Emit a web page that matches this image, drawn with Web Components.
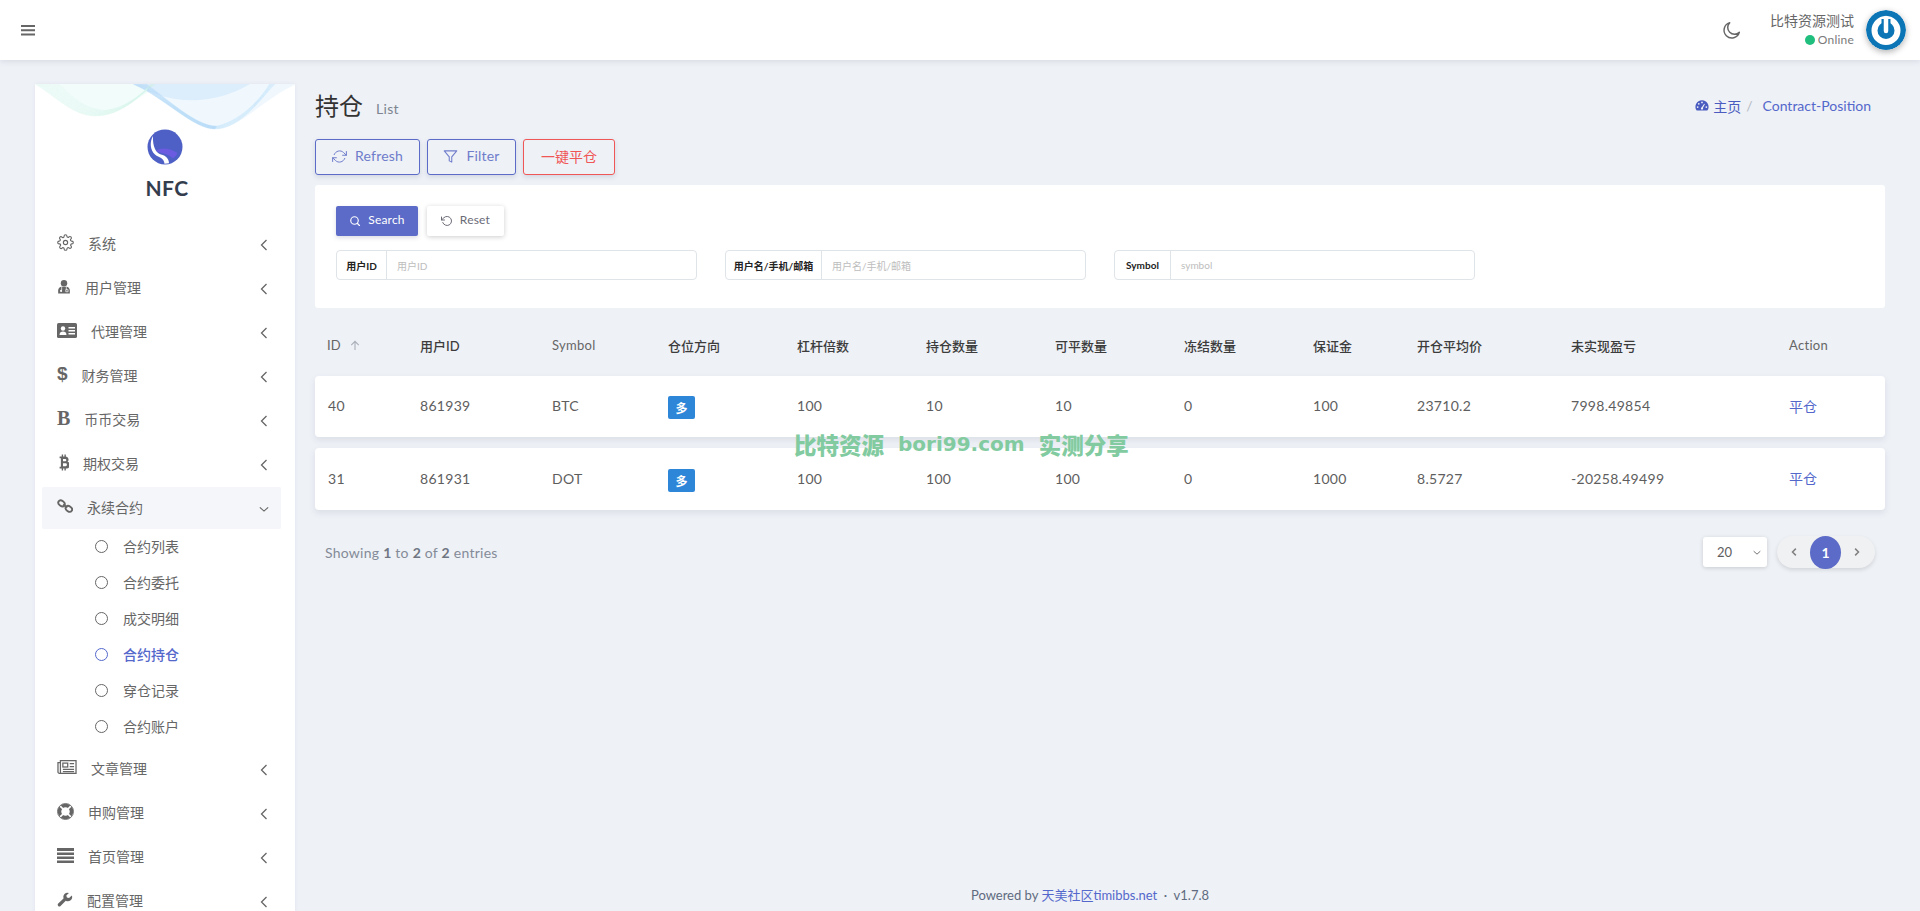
<!DOCTYPE html>
<html lang="zh">
<head>
<meta charset="utf-8">
<title>持仓</title>
<style>
  html, body { margin: 0; height: 911px; overflow: hidden; }
  body {
    display: flex; flex-direction: column;
    background: #eef1f6; color: #5e5e5e;
    font: 14px Lato, "Noto Sans CJK SC", sans-serif;
  }
</style>
</head>
<body>
<app-header></app-header>
<app-shell>
  <side-bar slot="side">
    <side-item icon="gear" label="系统"></side-item>
    <side-item icon="usermd" label="用户管理"></side-item>
    <side-item icon="card" label="代理管理"></side-item>
    <side-item glyph="$" label="财务管理"></side-item>
    <side-item glyph="B" serif label="币币交易"></side-item>
    <side-item icon="btc" label="期权交易"></side-item>
    <side-item icon="link" label="永续合约" open>
      <sub-item>合约列表</sub-item>
      <sub-item>合约委托</sub-item>
      <sub-item>成交明细</sub-item>
      <sub-item active>合约持仓</sub-item>
      <sub-item>穿仓记录</sub-item>
      <sub-item>合约账户</sub-item>
    </side-item>
    <side-item icon="news" label="文章管理"></side-item>
    <side-item icon="life" label="申购管理"></side-item>
    <side-item icon="rows" label="首页管理"></side-item>
    <side-item icon="wrench" label="配置管理"></side-item>
  </side-bar>

  <page-head></page-head>
  <tool-bar></tool-bar>
  <search-card>
    <search-field style="--label-w:49px" label="用户ID" hint="用户ID"></search-field>
    <search-field style="--label-w:95px" label="用户名/手机/邮箱" hint="用户名/手机/邮箱"></search-field>
    <search-field style="--label-w:55px" label="Symbol" hint="symbol"></search-field>
  </search-card>
  <table-head></table-head>
  <data-row values="40|861939|BTC||100|10|10|0|100|23710.2|7998.49854"></data-row>
  <data-row values="31|861931|DOT||100|100|100|0|1000|8.5727|-20258.49499"></data-row>
  <table-foot></table-foot>
  <app-footer></app-footer>
</app-shell>
<water-mark></water-mark>

<script>
// stroke icons use currentColor, filled ones set fill on their own paths
const ICONS = {
  bars: '<path d="M1 3h14v2H1zM1 7.2h14v2H1zM1 11.4h14v2H1z" fill="currentColor"/>',
  moon: '<path d="M20 14.5A8.5 8.5 0 1 1 9.5 4a6.8 6.8 0 0 0 10.5 10.5z" fill="none" stroke="currentColor" stroke-width="1.6" stroke-linejoin="round"/>',
  gear: '<circle cx="12" cy="12" r="3" fill="none" stroke="currentColor" stroke-width="1.6"/><path d="M19.4 15a1.65 1.65 0 0 0 .33 1.82l.06.06a2 2 0 1 1-2.83 2.83l-.06-.06a1.65 1.65 0 0 0-2.82 1.17V21a2 2 0 1 1-4 0v-.09a1.65 1.65 0 0 0-2.82-1.12l-.06.06a2 2 0 1 1-2.83-2.83l.06-.06A1.65 1.65 0 0 0 3.09 14H3a2 2 0 1 1 0-4h.09a1.65 1.65 0 0 0 1.12-2.82l-.06-.06a2 2 0 1 1 2.83-2.83l.06.06A1.65 1.65 0 0 0 10 3.09V3a2 2 0 1 1 4 0v.09a1.65 1.65 0 0 0 2.82 1.12l.06-.06a2 2 0 1 1 2.83 2.83l-.06.06A1.65 1.65 0 0 0 20.91 10H21a2 2 0 1 1 0 4h-.09a1.65 1.65 0 0 0-1.51 1z" fill="none" stroke="currentColor" stroke-width="1.6"/>',
  usermd: '<circle cx="12" cy="6.5" r="5.5" fill="currentColor"/><path d="M2 24v-5c0-4 3-6.5 6-6.5h8c3 0 6 2.500 6 6.500v5z" fill="currentColor"/><circle cx="7" cy="19.500" r="1.800" fill="#fff"/><path d="M15 17.500h4v3.500h-4zM8 13v5M16 13v5" fill="none" stroke="#fff" stroke-width="1.200"/>',
  card: '<rect x="0" y="1" width="20" height="15" rx="1.600" fill="currentColor"/><circle cx="6" cy="6.500" r="2.200" fill="#fff"/><path d="M2.500 13c0-2.500 1.500-3.500 3.500-3.500s3.500 1 3.500 3.500z" fill="#fff"/><path d="M11.500 5h6.500v1.500h-6.500zM11.500 8h6.500v1.500h-6.500zM11.500 11h6.500v1.500h-6.500z" fill="#fff"/>',
  btc: '<path d="M3 3h7a3.500 3.500 0 0 1 2.200 6.200A4 4 0 0 1 10.500 17H3v-2h1.500V5H3z" fill="currentColor"/><path d="M7 6v2.600h2.600a1.300 1.300 0 0 0 0-2.600zM7 11v3.300h3a1.650 1.650 0 0 0 0-3.300z" fill="#fff"/><path d="M5.500 .5h1.600v3H5.500zM8.700 .5h1.600v3H8.700zM5.500 16.500h1.600v3H5.500zM8.700 16.500h1.600v3H8.700z" fill="currentColor"/>',
  link: '<g fill="none" stroke="currentColor" stroke-width="2"><ellipse cx="4.800" cy="4.200" rx="3.700" ry="2.700" transform="rotate(35 4.800 4.200)"/><ellipse cx="12.600" cy="10" rx="3.700" ry="2.700" transform="rotate(35 12.600 10)"/><path d="M6.500 5.500l4.500 3.200"/></g>',
  news: '<g fill="none" stroke="currentColor" stroke-width="1.300"><path d="M3.500 1.500h16v13h-17a1.500 1.500 0 0 1-1.500-1.500v-9.500h2.500z"/><path d="M3.500 3.500v11"/><rect x="6" y="4" width="5" height="4"/><path d="M13 4.500h4.500M13 7.500h4.500M6 10.500h11.500M6 12.700h11.500"/></g>',
  life: '<circle cx="12" cy="12" r="8.500" fill="none" stroke="currentColor" stroke-width="5"/><path d="M4.500 4.500l4 4M19.500 4.500l-4 4M4.500 19.500l4-4M19.500 19.500l-4-4" stroke="#fff" stroke-width="2.400"/><circle cx="12" cy="12" r="11.300" fill="none" stroke="currentColor" stroke-width="1.200"/>',
  rows: '<path d="M0 1h17v3H0zM0 5.500h17v2.500H0zM0 9.500h17v2.500H0zM0 13.500h17v2.500H0z" fill="currentColor"/>',
  wrench: '<path d="M15.800 3.600l-3 2.700-2.300-.5-.6-2.200L12.700 1A4.600 4.600 0 0 0 6.900 6.900L1 12.600a1.800 1.800 0 0 0 2.500 2.500l5.800-5.800a4.600 4.600 0 0 0 6.500-5.700z" fill="currentColor"/>',
  left: '<path d="M6.500 1L1.500 6l5 5" fill="none" stroke="currentColor" stroke-width="1.300"/>',
  lbold: '<path d="M6.500 1.500L2 6l4.500 4.500" fill="none" stroke="currentColor" stroke-width="2"/>',
  rbold: '<path d="M1.500 1.500L6 6l-4.500 4.500" fill="none" stroke="currentColor" stroke-width="2"/>',
  down: '<path d="M1 1.500l5 4.500 5-4.500" fill="none" stroke="currentColor" stroke-width="1.300"/>',
  refresh: '<g fill="none" stroke="currentColor" stroke-width="1.600" stroke-linecap="round" stroke-linejoin="round"><path d="M23 4v6h-6M1 20v-6h6"/><path d="M3.500 9A9 9 0 0 1 18.400 5.600L23 10M1 14l4.600 4.400A9 9 0 0 0 20.500 15"/></g>',
  filter: '<path d="M22 3H2l8 9.500V19l4 2v-8.500z" fill="none" stroke="currentColor" stroke-width="1.700" stroke-linejoin="round"/>',
  search: '<circle cx="11" cy="11" r="7.500" fill="none" stroke="currentColor" stroke-width="2.300"/><path d="M21 21l-4.500-4.500" stroke="currentColor" stroke-width="2.300" stroke-linecap="round"/>',
  reset: '<g fill="none" stroke="currentColor" stroke-width="2" stroke-linecap="round" stroke-linejoin="round"><path d="M1 4v6h6"/><path d="M3.500 15a9 9 0 1 0 2.100-9.400L1 10"/></g>',
  gauge: '<path d="M8 1.500A7.500 7.500 0 0 0 1.900 13.400h12.200A7.500 7.500 0 0 0 8 1.500z" fill="currentColor"/><circle cx="8" cy="4" r="1" fill="#eef1f6"/><circle cx="4.300" cy="5.600" r="1" fill="#eef1f6"/><circle cx="3" cy="9.300" r="1" fill="#eef1f6"/><circle cx="13" cy="9.300" r="1" fill="#eef1f6"/><path d="M7.200 10.500l3.300-4.900.8.500-2.600 5z" fill="#eef1f6"/><circle cx="8" cy="11" r="1.300" fill="#eef1f6"/>',
  arrowup: '<path d="M6 12V1.500M1.500 6L6 1.500 10.500 6" fill="none" stroke="currentColor" stroke-width="1.300"/>'
};
const VIEW = {
  bars: [16, 16], moon: [24, 24], gear: [24, 24], usermd: [24, 24], card: [20, 17], btc: [14, 20],
  link: [17, 14], news: [20.500, 16], life: [24, 24], rows: [17, 17], wrench: [17, 16],
  left: [8, 12], lbold: [8, 12], rbold: [8, 12], down: [12, 7], refresh: [24, 24], filter: [24, 24], search: [24, 24], reset: [24, 24],
  gauge: [16, 15], arrowup: [12, 13]
};
function icon(name, w, h) {
  const [vw, vh] = VIEW[name];
  return `<svg width="${w}" height="${h || w}" viewBox="0 0 ${vw} ${vh}" aria-hidden="true" style="display:block;flex:none">${ICONS[name]}</svg>`;
}

class Base extends HTMLElement {
  constructor() {
    super();
    this.attachShadow({ mode: 'open' });
  }
  connectedCallback() {
    this.shadowRoot.innerHTML = this.render();
  }
}

class AppHeader extends Base {
  render() {
    return `<style>
      :host { display:flex; align-items:center; height:60px; flex:none; background:#fff; position:relative; z-index:2;
        box-shadow:0 1px 6px rgba(80,90,110,.16); padding:0 14px 0 20px; }
      .menu { color:#666; }
      .right { margin-left:auto; display:flex; align-items:center; }
      .moon { color:#666; margin-right:27px; }
      .who { text-align:right; margin-right:12px; color:#666; }
      .name { font-size:14px; line-height:20px; }
      .state { font-size:12px; line-height:18px; color:#7a7a7a; display:flex; align-items:center; justify-content:flex-end; gap:3px; letter-spacing:.2px; }
      .dot { width:10px; height:10px; border-radius:50%; background:#20bf7e; }
      .avatar { width:40px; height:40px; border-radius:50%; box-shadow:0 2px 6px rgba(0,0,0,.3); display:block; }
    </style>
    <span class="menu">${icon('bars', 16)}</span>
    <div class="right">
      <span class="moon">${icon('moon', 22)}</span>
      <div class="who">
        <div class="name">比特资源测试</div>
        <div class="state"><span class="dot"></span>Online</div>
      </div>
      <svg class="avatar" viewBox="0 0 40 40" aria-hidden="true">
        <circle cx="20" cy="20" r="20" fill="#0b75b5"/>
        <circle cx="20" cy="20.500" r="11.500" fill="none" stroke="#fff" stroke-width="6"/>
        <path d="M20 9v12" stroke="#0b75b5" stroke-width="9"/>
        <path d="M20 8v13" stroke="#fff" stroke-width="4.500" stroke-linecap="round"/>
      </svg>
    </div>`;
  }
}

class AppShell extends Base {
  render() {
    return `<style>
      :host { display:flex; flex:1; min-height:0; gap:20px; padding:24px 35px 0; overflow:hidden; }
      .side { display:block; width:260px; flex:none; }
      .main { flex:1; min-width:0; display:flex; flex-direction:column; }
    </style>
    <div class="side"><slot name="side"></slot></div>
    <div class="main"><slot></slot></div>`;
  }
}

class SideBar extends Base {
  // the wave in the corner: pale fills, then a family of thin curves over them
  waves() {
    let out = `
      <path d="M0 0C20 12 38 32 60 32 85 32 100 15 120 4L122 0z" fill="#f2fcfa"/>
      <path d="M98 0C130 14 158 45 180 45 205 45 232 12 262 0z" fill="#f0f8fe"/>
      <path d="M98 0C118 10 138 18 165 16 188 14 205 6 215 0z" fill="#dcedfc"/>`;
    for (let i = 0; i < 18; i++) {
      const t = i / 18;
      out += `<path d="M${98 + t * 14} 0C${130 + t * 4} ${14 + t * 2} ${158 + t * 3} ${45 - t * 3} ${180 + t * 2} ${45 - t * 3}" stroke="#9fd0f7"/>`;
      out += `<path d="M${180 + t * 2} ${45 - t * 3}C${205 + t * 4} ${45 - t * 10} ${225 + t * 4} ${16 - t * 6} ${240 - t * 6} 0" stroke="#c5e4fb"/>`;
      out += `<path d="M${t * 25} 0C${20 + t * 15} ${12 - t * 4} ${38 + t * 8} ${32 - t * 8} ${60 + t * 10} ${32 - t * 6} ${85 + t * 5} ${32 - t * 8} ${100 + t * 6} ${15 - t * 4} ${120 - t * 4} 0" stroke="#d2f4ec"/>`;
    }
    return out;
  }
  render() {
    return `<style>
      :host { display:block; width:260px; min-height:830px; background:#fff; box-shadow:0 0 4px rgba(90,100,130,.08); }
      .top { height:138px; position:relative; display:flex; flex-direction:column; align-items:center; }
      .wave { position:absolute; left:0; top:0; }
      .wave path[stroke] { fill:none; stroke-width:.35; opacity:.55; }
      .logo { margin-top:45px; position:relative; display:block; margin-left:-1px; }
      .name { font-size:21px; line-height:26px; font-weight:700; color:#343d4d; margin-top:10px; letter-spacing:.4px; position:relative; margin-left:4px; }
    </style>
    <div class="top">
      <svg class="wave" width="260" height="52" viewBox="0 0 260 52" aria-hidden="true">${this.waves()}</svg>
      <svg class="logo" width="36" height="36" viewBox="0 0 36 36" aria-hidden="true">
        <circle cx="18" cy="18" r="17.500" fill="#4e60c5"/>
        <path d="M8.500 22C13 18.500 22 18.500 30.500 24 29.500 26 28 28 26 29.500 21 24.500 14 24.500 8.500 22z" fill="#6a5be0"/>
        <path d="M6 7C2.500 13 3 21 8 25.500 12 29 17 28.500 17.500 34.800L22 34.200C22 29.500 18.500 26.500 14 25.500 9 24 5.500 18 6 7z" fill="#fff"/>
      </svg>
      <div class="name">NFC</div>
    </div>
    <slot></slot>`;
  }
}

class SideItem extends Base {
  render() {
    const name = this.getAttribute('icon');
    const glyph = this.getAttribute('glyph');
    const sizes = { gear: [17, 17], usermd: [14, 15], card: [20, 17], btc: [12, 17], link: [16, 14], news: [20, 16], life: [17, 17], rows: [17, 17], wrench: [16, 15] };
    const open = this.hasAttribute('open');
    const fam = this.hasAttribute('serif') ? '"Liberation Serif",serif' : '"Liberation Sans",sans-serif';
    const fs = this.hasAttribute('serif') ? 20 : 19;
    return `<style>
      :host { display:block; margin:0 14px 0 7px; padding:1px 0; }
      .row { height:42px; display:flex; align-items:center; padding:0 11px 0 15px; color:#666; border-radius:2px; ${open ? 'background:#f5f6f9;' : ''} }
      .ic { position:relative; top:-2px; }
      .gl::before { content:attr(data-g); font:700 ${fs}px/20px ${fam}; display:block; }
      .label { margin-left:14px; flex:1; position:relative; top:-1px; }
      .tail { color:#666; display:flex; width:12px; justify-content:center; margin-top:2px; }
      .list { margin:-1px 0 2px; }
    </style>
    <div class="row">
      ${glyph ? `<span class="ic gl" data-g="${glyph}"></span>` : `<span class="ic">${icon(name, sizes[name][0], sizes[name][1])}</span>`}
      <span class="label">${this.getAttribute('label')}</span>
      <span class="tail">${open ? icon('down', 10, 6) : icon('left', 8, 12)}</span>
    </div>
    ${open ? '<div class="list"><slot></slot></div>' : ''}`;
  }
}

class SubItem extends Base {
  render() {
    const active = this.hasAttribute('active');
    return `<style>
      :host { display:flex; align-items:center; height:36px; padding-left:53px; color:${active ? '#5468cc' : '#666'}; ${active ? 'font-weight:500;' : ''} }
      .ring { width:11px; height:11px; border:1.400px solid currentColor; border-radius:50%; margin-right:15px; flex:none; }
    </style><span class="ring"></span><slot></slot>`;
  }
}

class PageHead extends Base {
  render() {
    return `<style>
      :host { display:flex; align-items:center; height:55px; flex:none; padding-bottom:10px; box-sizing:border-box; position:relative; top:-1px; }
      h1 { margin:0; font-size:24px; font-weight:400; color:#333; line-height:40px; }
      small { font-size:14px; color:#7d8590; margin-left:13px; margin-top:5px; letter-spacing:.3px; }
      nav { margin-left:auto; display:flex; align-items:center; color:#5468cc; padding-right:14px; }
      .home { display:flex; align-items:center; gap:4px; color:#4a5cc0; }
      .sep { color:#b5bac4; margin:0 10px 0 5px; }
    </style>
    <h1>持仓</h1><small>List</small>
    <nav><span class="home">${icon('gauge', 14, 13)}主页</span><span class="sep">/</span><span>Contract-Position</span></nav>`;
  }
}

class ToolBar extends Base {
  render() {
    return `<style>
      :host { display:flex; gap:7px; height:36px; flex:none; margin-bottom:10px; }
      .btn { box-sizing:border-box; height:36px; display:flex; align-items:center; justify-content:center; gap:8px; border:1px solid #5c6bc7; border-radius:3px; color:#6f7dcb; font-size:14px; box-shadow:0 2px 5px rgba(80,90,130,.18); padding-bottom:3px; letter-spacing:.2px; }
      .btn svg { margin-top:2px; }
      .red { border-color:#f05656; color:#f05656; letter-spacing:0; }
    </style>
    <div class="btn" style="width:105px">${icon('refresh', 15)}Refresh</div>
    <div class="btn" style="width:89px">${icon('filter', 15)}Filter</div>
    <div class="btn red" style="width:92px">一键平仓</div>`;
  }
}

class SearchCard extends Base {
  render() {
    return `<style>
      :host { display:block; box-sizing:border-box; height:123px; flex:none; background:#fff; border-radius:3px; padding:21px 21px 0; }
      .btns { display:flex; gap:9px; height:30px; margin-bottom:14px; }
      .btn { display:flex; align-items:center; justify-content:center; gap:7px; height:30px; box-sizing:border-box; font-size:12px; border-radius:2px; padding-bottom:3px; letter-spacing:.2px; }
      .btn svg { margin-top:2px; }
      .search { width:82px; background:#5c6bc7; color:#fff; box-shadow:0 2px 4px rgba(80,90,130,.2); }
      .reset { width:77px; background:#fff; color:#6b6b78; box-shadow:0 1px 5px rgba(0,0,0,.2); }
      .grid { display:grid; grid-template-columns:repeat(3,361px); column-gap:28px; }
    </style>
    <div class="btns">
      <div class="btn search">${icon('search', 12)}Search</div>
      <div class="btn reset">${icon('reset', 12)}Reset</div>
    </div>
    <div class="grid"><slot></slot></div>`;
  }
}

class SearchField extends Base {
  render() {
    return `<style>
      :host { display:flex; box-sizing:border-box; height:30px; border:1px solid #dfe4e8; border-radius:4px; font-size:10px; align-items:stretch; background:#fff; }
      .l { width:var(--label-w); flex:none; display:flex; align-items:center; justify-content:center; border-right:1px solid #dfe4e8; color:#222; font-weight:700; white-space:nowrap; }
      .i { padding-left:10px; display:flex; align-items:center; color:#bdbdbd; }
    </style>
    <span class="l">${this.getAttribute('label')}</span><span class="i">${this.getAttribute('hint')}</span>`;
  }
}

const COLUMNS = 'grid-template-columns:92px 132px 116px 129px 129px 129px 129px 129px 104px 154px 218px 1fr;';

class TableHead extends Base {
  render() {
    const cols = ['用户ID', 'Symbol', '仓位方向', '杠杆倍数', '持仓数量', '可平数量', '冻结数量', '保证金', '开仓平均价', '未实现盈亏', 'Action'];
    return `<style>
      :host { display:grid; ${COLUMNS} height:68px; flex:none; align-items:center; padding-left:13px; padding-top:6px; box-sizing:border-box; font-size:13px; color:#444; }
      .id { display:flex; align-items:center; gap:9px; color:#666; margin-left:-1px; }
      .id svg { color:#a9aeb8; }
      span.cjk { font-weight:500; color:#3c3c3c; }
      span.en { color:#666; letter-spacing:.3px; }
    </style>
    <div class="id">ID ${icon('arrowup', 10, 11)}</div>
    ${cols.map(c => `<span class="${/^[A-Za-z]+$/.test(c) ? 'en' : 'cjk'}">${c}</span>`).join('')}`;
  }
}

class DataRow extends Base {
  render() {
    const vals = this.getAttribute('values').split('|');
    return `<style>
      :host { display:grid; ${COLUMNS} height:61px; flex:none; align-items:center; padding:0 0 2px 13px; box-sizing:border-box; background:#fff; border-radius:4px; margin-bottom:11px; box-shadow:0 3px 6px rgba(90,100,130,.13); color:#5e5e5e; font-size:14px; letter-spacing:.3px; }
      :host(:last-of-type) { height:62px; }
      .badge { display:inline-flex; align-items:center; justify-content:center; width:27px; height:23px; background:#2e86d9; color:#fff; font-size:12px; font-weight:700; border-radius:2px; position:relative; top:2px; letter-spacing:0; }
      .act { color:#5468cc; letter-spacing:0; }
    </style>
    ${vals.map(v => v === '' ? '<div><span class="badge">多</span></div>' : `<span>${v}</span>`).join('')}
    <span class="act">平仓</span>`;
  }
}

class TableFoot extends Base {
  render() {
    return `<style>
      :host { display:flex; align-items:center; flex:none; margin-top:15px; height:32px; padding:0 10px; color:#848b98; font-size:14px; }
      b { font-weight:700; color:#6f7683; }
      .txt { letter-spacing:.25px; }
      .right { margin-left:auto; display:flex; align-items:center; gap:10px; }
      .sel { width:64px; height:30px; box-sizing:border-box; padding:0 6px 0 14px; background:#fff; border-radius:3px; display:flex; align-items:center; justify-content:space-between; color:#5e5e5e; font-size:13px; box-shadow:0 1px 4px rgba(0,0,0,.16); }
      .pager { width:98px; height:32px; box-sizing:border-box; padding-left:14px; border-radius:16px; background:#f0f1f2; box-shadow:0 2px 4px rgba(0,0,0,.12); display:flex; align-items:center; gap:13px; color:#808080; }
      .cur { width:31px; height:33px; border-radius:50%; background:#5c6bc7; color:#fff; font-weight:700; display:flex; align-items:center; justify-content:center; }
    </style>
    <span class="txt">Showing <b>1</b> to <b>2</b> of <b>2</b> entries</span>
    <div class="right">
      <div class="sel">20 ${icon('down', 8, 5)}</div>
      <div class="pager">${icon('lbold', 6, 10)}<span class="cur">1</span>${icon('rbold', 6, 10)}</div>
    </div>`;
  }
}

class AppFooter extends Base {
  render() {
    return `<style>
      :host { display:block; margin-top:auto; text-align:center; font-size:13px; color:#5f6b80; padding:0 20px 7px 0; }
      span { color:#5468cc; }
    </style>Powered by <span>天美社区timibbs.net</span> &nbsp;·&nbsp; v1.7.8`;
  }
}

class WaterMark extends Base {
  render() {
    return `<style>
      :host { position:absolute; left:794px; top:432px; display:flex; align-items:center; gap:14px; font:900 22.500px/24px "Noto Sans CJK SC",sans-serif; color:#82cba0; white-space:nowrap; z-index:3; }
      .en { font:700 20px/24px "DejaVu Sans",sans-serif; }
    </style><span>比特资源</span><span class="en">bori99.com</span><span>实测分享</span>`;
  }
}

customElements.define('app-header', AppHeader);
customElements.define('app-shell', AppShell);
customElements.define('side-bar', SideBar);
customElements.define('side-item', SideItem);
customElements.define('sub-item', SubItem);
customElements.define('page-head', PageHead);
customElements.define('tool-bar', ToolBar);
customElements.define('search-card', SearchCard);
customElements.define('search-field', SearchField);
customElements.define('table-head', TableHead);
customElements.define('data-row', DataRow);
customElements.define('table-foot', TableFoot);
customElements.define('app-footer', AppFooter);
customElements.define('water-mark', WaterMark);
</script>
</body>
</html>
